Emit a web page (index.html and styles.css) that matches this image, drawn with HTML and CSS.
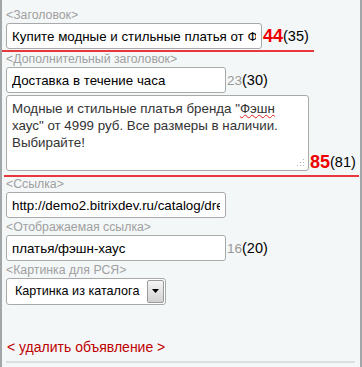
FILE: index.html
```html
<!DOCTYPE html>
<html>
<head>
<meta charset="utf-8">
<link rel="stylesheet" href="styles.css">
</head>
<body>
<div class="panel">
  <div class="label">&lt;Заголовок&gt;</div>
  <div class="row over over-1">
    <input class="inp inp-title" type="text" value="Купите модные и стильные платья от Фэшн хаус">
    <span class="cnt-bad">44</span><span class="cnt-max">(35)</span>
  </div>
  <div class="label">&lt;Дополнительный заголовок&gt;</div>
  <div class="row row-tight">
    <input class="inp inp-short" type="text" value="Доставка в течение часа">
    <span class="cnt-ok">23</span><span class="cnt-max">(30)</span>
  </div>
  <div class="row row-end over over-2">
    <div class="textarea">Модные и стильные платья бренда "<span class="spell">Фэшн</span> хаус" от 4999 руб. Все размеры в наличии. Выбирайте!<svg class="grip" width="8" height="8" viewBox="0 0 8 8"><g fill="#b0b0b0"><rect x="6" y="0" width="1" height="1"/><rect x="6" y="3" width="1" height="1"/><rect x="3" y="3" width="1" height="1"/><rect x="6" y="6" width="1" height="1"/><rect x="3" y="6" width="1" height="1"/><rect x="0" y="6" width="1" height="1"/></g></svg></div>
    <span class="cnt-bad">85</span><span class="cnt-max">(81)</span>
  </div>
  <div class="label">&lt;Ссылка&gt;</div>
  <div class="row">
    <input class="inp inp-short" type="text" value="http://demo2.bitrixdev.ru/catalog/dresses/">
  </div>
  <div class="label">&lt;Отображаемая ссылка&gt;</div>
  <div class="row">
    <input class="inp inp-short" type="text" value="платья/фэшн-хаус">
    <span class="cnt-ok">16</span><span class="cnt-max">(20)</span>
  </div>
  <div class="label">&lt;Картинка для РСЯ&gt;</div>
  <div class="row">
    <div class="select"><span class="sel-text">Картинка из каталога</span><span class="sel-btn"><svg width="7" height="4" viewBox="0 0 7 4"><path d="M0 0H7L3.5 4Z" fill="#000"/></svg></span></div>
  </div>
  <div class="delete">&lt; удалить объявление &gt;</div>
  <div class="bottom-line"></div>
</div>
</body>
</html>
```
FILE: styles.css
```css
html, body {
  margin: 0;
  padding: 0;
}
body {
  font-family: "Liberation Sans", Arial, sans-serif;
  font-size: 13.33px;
  color: #000;
  background: #f4f7f8;
}
.panel {
  height: 367px;
  box-sizing: border-box;
  border-left: 2px solid #a2a6a9;
  border-right: 2px solid #a2a6a9;
  background: #f4f7f8;
  padding: 8px 0 0 4px;
}
.label {
  color: #a0a0a0;
  font-size: 12.3px;
  line-height: 15px;
  height: 15px;
}
.row {
  display: flex;
  align-items: center;
  height: 26px;
  margin-bottom: 2px;
}
.row-tight {
  margin-bottom: 2px;
}
.row-end {
  align-items: flex-end;
  height: auto;
}
.over {
  border-bottom: 2px solid #e8383d;
  display: inline-flex;
  box-sizing: content-box;
  margin-bottom: 0;
}
.over-1 {
  margin-left: -4px;
  padding-left: 4px;
  width: 308px;
  padding-bottom: 1px;
}
.over-2 {
  margin-left: -2px;
  padding-left: 2px;
  width: 353px;
  padding-bottom: 4px;
}
.inp {
  box-sizing: border-box;
  height: 26px;
  border: 1px solid #a9a9a9;
  border-radius: 3px;
  background: #fff;
  font-family: "Liberation Sans", Arial, sans-serif;
  font-size: 13.33px;
  color: #000;
  padding: 0 5px;
  margin: 0;
  outline: none;
}
.inp-title {
  width: 256px;
}
.inp-short {
  width: 220px;
}
.cnt-bad {
  color: #ee0000;
  font-weight: bold;
  font-size: 18px;
  margin-left: 1px;
}
.cnt-ok {
  color: #999;
  font-size: 13.5px;
  margin-left: 1px;
}
.cnt-max {
  font-size: 14.5px;
  color: #000;
}
.textarea {
  position: relative;
  box-sizing: border-box;
  width: 303px;
  height: 76px;
  border: 1px solid #a9a9a9;
  border-radius: 3px;
  background: #fff;
  padding: 4px 5px;
  line-height: 17px;
  font-size: 13.33px;
  color: #333;
}
.row-end .cnt-bad,
.row-end .cnt-max {
  line-height: 18px;
}
.spell {
  text-decoration: underline wavy #e02020;
  text-decoration-thickness: 1px;
}
.grip {
  position: absolute;
  right: 3px;
  bottom: 3px;
}
.select {
  box-sizing: border-box;
  width: 160px;
  height: 27px;
  border: 1px solid #a9a9a9;
  border-radius: 3px;
  background: #fff;
  display: flex;
  align-items: stretch;
  overflow: hidden;
  padding: 1px 1px 1px 0;
}
.sel-text {
  flex: 1;
  display: flex;
  align-items: center;
  padding-left: 8px;
  font-size: 12.6px;
  white-space: nowrap;
  overflow: hidden;
}
.sel-btn {
  width: 15px;
  border: 1px solid #9a9a9a;
  border-radius: 2px;
  background: linear-gradient(#f4f4f4, #d2d2d2);
  display: flex;
  align-items: center;
  justify-content: center;
}
.delete {
  color: #c00000;
  font-size: 14px;
  margin-top: 35px;
  line-height: 16px;
  padding-left: 1px;
}
.bottom-line {
  margin-top: 6px;
  width: 349px;
  border-top: 2px solid #dcdfe1;
}
```
